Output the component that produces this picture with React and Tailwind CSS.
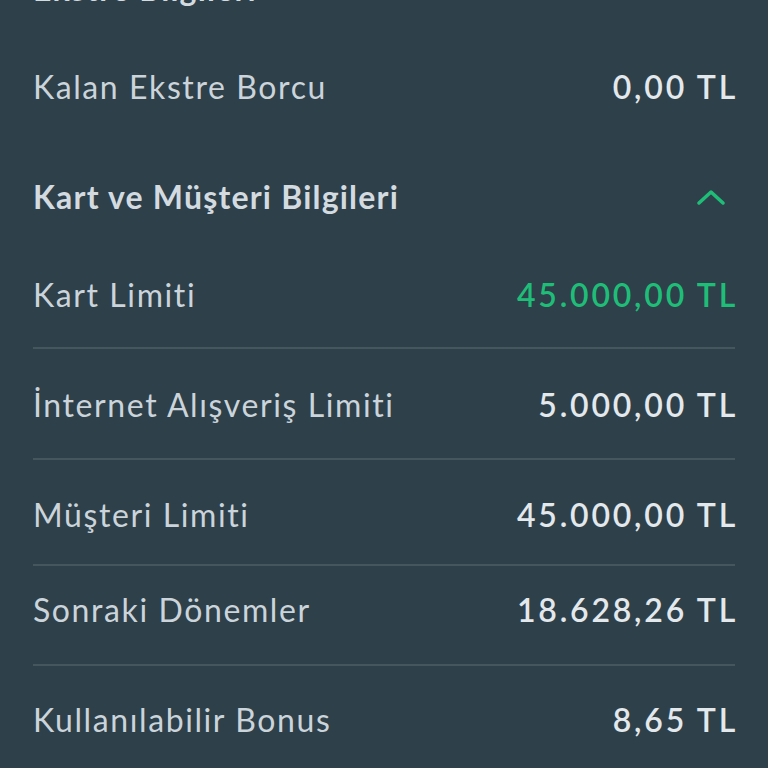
export default function App() {
  const label = "text-[32px] text-[#cbd4da] leading-none tracking-[1.6px]";
  const value = "text-[32px] font-semibold text-[#e3e8ec] leading-none tracking-[2.8px] -mr-[3px]";
  const heading = "text-[32px] font-bold text-[#d3dbe0] leading-none tracking-[1.2px]";
  const divider = <div className="h-[2px] bg-[#46565e]" />;
  return (
    <div
      className="w-[768px] h-[768px] overflow-hidden bg-[#2e404a]"
      style={{ fontFamily: "Lato, 'Noto Sans', sans-serif" }}
    >
      <div className="px-[33px] -mt-[61px]">
        <div className="h-[100px] flex items-center">
          <span className={heading}>Ekstre Bilgileri</span>
        </div>
        <div className="h-[96px] flex items-center justify-between">
          <span className={label}>Kalan Ekstre Borcu</span>
          <span className={value}>0,00 TL</span>
        </div>
        <div className="h-[124px] flex items-center justify-between">
          <span className={heading}>Kart ve Müşteri Bilgileri</span>
          <svg width="28" height="18" viewBox="0 0 28 18" className="mr-[10px]">
            <path d="M2 15 L14 4 L26 15" fill="none" stroke="#1fbe78" strokeWidth="3.5" strokeLinecap="round" strokeLinejoin="round" />
          </svg>
        </div>
        <div className="h-[88px] pb-[16px] flex items-center justify-between">
          <span className={label}>Kart Limiti</span>
          <span className="text-[32px] font-semibold text-[#1fbe78] leading-none tracking-[2.8px] -mr-[3px]">45.000,00 TL</span>
        </div>
        {divider}
        <div className="h-[109px] pt-[3px] flex items-center justify-between">
          <span className={label}>İnternet Alışveriş Limiti</span>
          <span className={value}>5.000,00 TL</span>
        </div>
        {divider}
        <div className="h-[104px] pt-[6px] flex items-center justify-between">
          <span className={label}>Müşteri Limiti</span>
          <span className={value}>45.000,00 TL</span>
        </div>
        {divider}
        <div className="h-[98px] pb-[10px] flex items-center justify-between">
          <span className={label}>Sonraki Dönemler</span>
          <span className={value}>18.628,26 TL</span>
        </div>
        {divider}
        <div className="h-[108px] flex items-center justify-between">
          <span className={label}>Kullanılabilir Bonus</span>
          <span className={value}>8,65 TL</span>
        </div>
      </div>
    </div>
  );
}
